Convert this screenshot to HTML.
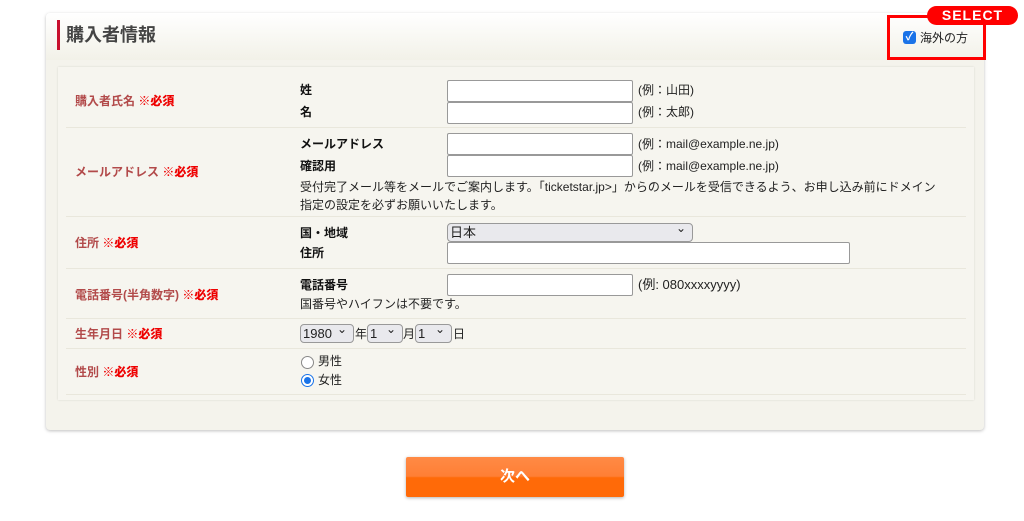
<!DOCTYPE html><html><head><meta charset="utf-8"><style>
body{margin:0;width:1024px;height:521px;background:#fff;font-family:"Liberation Sans","Noto Sans CJK JP",sans-serif;font-size:12px;line-height:14px;color:#222;position:relative;overflow:hidden}
.a{position:absolute}
.outer{left:46px;top:13px;width:938px;height:417px;background:#f4f3ec;border-radius:4px;box-shadow:0 1px 3px rgba(0,0,0,.25)}
.hdr{left:46px;top:13px;width:938px;height:47px;background:linear-gradient(#fff,#f2f1e8);border-radius:4px 4px 0 0}
.inner{left:58px;top:67px;width:916px;height:333px;background:#f6f5ef;box-shadow:0 0 2px rgba(0,0,0,.12)}
.sep{left:66px;width:900px;height:1px;background:#e9e7dc}
.lab{left:75px;color:#b24a4a;font-weight:bold;font-size:12px}
.lab b{color:#e00}
.fl{left:300px;font-weight:bold;font-size:12px;color:#111}
.in{left:447px;width:184px;height:20px;background:#fff;border:1px solid #999;border-radius:2px}
.ex{left:638px;font-size:12px}
.sel{background:#e9e9ed;border:1px solid #999;border-radius:4px;height:17px;font-size:13px;line-height:17px;padding-left:2px;box-sizing:border-box}
.sel:after{content:"⌄";position:absolute;right:6px;top:-4px;font-size:12px}
.t{font-size:12px}
</style></head><body>
<div class="a outer"></div><div class="a hdr"></div>
<div class="a" style="left:57px;top:20px;width:3px;height:30px;background:#c8102e"></div>
<div class="a" style="left:66px;top:24px;font-size:18px;line-height:22px;font-weight:bold;color:#444">購入者情報</div>
<div class="a" style="left:887px;top:15px;width:93px;height:39px;border:3px solid #f00"></div>
<div class="a" style="left:927px;top:6px;width:91px;height:19px;background:#f00;border-radius:10px;color:#fff;font-weight:bold;font-size:14px;text-align:center;line-height:19px;letter-spacing:1px">SELECT</div>
<div class="a" style="left:903px;top:31px;width:13px;height:13px;background:#1a73e8;border-radius:3px;color:#fff;font-size:11px;line-height:13px;text-align:center;font-weight:bold">✓</div>
<div class="a t" style="left:920px;top:31px">海外の方</div>
<div class="a inner"></div>
<div class="a sep" style="top:127px"></div><div class="a sep" style="top:216px"></div><div class="a sep" style="top:268px"></div><div class="a sep" style="top:318px"></div><div class="a sep" style="top:348px"></div><div class="a sep" style="top:394px"></div>
<div class="a lab" style="top:94px">購入者氏名 <b>※必須</b></div>
<div class="a fl" style="top:83px">姓</div><div class="a fl" style="top:105px">名</div>
<div class="a in" style="top:80px"></div><div class="a in" style="top:102px"></div>
<div class="a ex" style="top:83px">(例：山田)</div><div class="a ex" style="top:105px">(例：太郎)</div>
<div class="a lab" style="top:165px">メールアドレス <b>※必須</b></div>
<div class="a fl" style="top:137px">メールアドレス</div><div class="a fl" style="top:159px">確認用</div>
<div class="a in" style="top:133px"></div><div class="a in" style="top:155px"></div>
<div class="a ex" style="top:137px">(例：mail@example.ne.jp)</div><div class="a ex" style="top:159px">(例：mail@example.ne.jp)</div>
<div class="a t" style="left:300px;top:178px;line-height:18px">受付完了メール等をメールでご案内します。「ticketstar.jp>」からのメールを受信できるよう、お申し込み前にドメイン<br>指定の設定を必ずお願いいたします。</div>
<div class="a lab" style="top:236px">住所 <b>※必須</b></div>
<div class="a fl" style="top:226px">国・地域</div><div class="a fl" style="top:246px">住所</div>
<div class="a sel" style="left:447px;top:223px;width:246px;height:19px;line-height:17px">日本</div>
<div class="a in" style="top:242px;width:401px"></div>
<div class="a lab" style="top:288px">電話番号(半角数字) <b>※必須</b></div>
<div class="a fl" style="top:278px">電話番号</div>
<div class="a in" style="top:274px"></div>
<div class="a ex" style="top:278px;font-size:13px">(例: 080xxxxyyyy)</div>
<div class="a t" style="left:300px;top:297px">国番号やハイフンは不要です。</div>
<div class="a lab" style="top:327px">生年月日 <b>※必須</b></div>
<div class="a sel" style="left:300px;top:324px;width:54px;height:19px">1980</div>
<div class="a t" style="left:355px;top:327px">年</div>
<div class="a sel" style="left:367px;top:324px;width:36px;height:19px">1</div>
<div class="a t" style="left:403px;top:327px">月</div>
<div class="a sel" style="left:415px;top:324px;width:37px;height:19px">1</div>
<div class="a t" style="left:453px;top:327px">日</div>
<div class="a lab" style="top:365px">性別 <b>※必須</b></div>
<div class="a" style="left:301px;top:356px;width:11px;height:11px;border:1px solid #888;border-radius:50%;background:#fff"></div>
<div class="a t" style="left:318px;top:354px">男性</div>
<div class="a" style="left:301px;top:374px;width:11px;height:11px;border:1px solid #1a73e8;border-radius:50%;background:#fff"><div class="a" style="left:2px;top:2px;width:7px;height:7px;border-radius:50%;background:#1a73e8"></div></div>
<div class="a t" style="left:318px;top:373px">女性</div>
<div class="a" style="left:406px;top:457px;width:218px;height:40px;background:linear-gradient(#ff8a45 0%,#ff7f35 48%,#ff6a08 52%,#ff6a08);border-radius:2px;box-shadow:0 1px 3px rgba(0,0,0,.3);color:#fff;font-weight:bold;font-size:15px;text-align:center;line-height:40px">次へ</div>
</body></html>
